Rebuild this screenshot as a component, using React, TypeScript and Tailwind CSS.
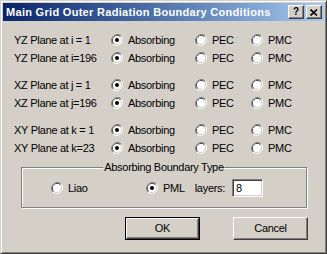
import React from 'react'

const rows = [
  { label: 'YZ Plane at i = 1' },
  { label: 'YZ Plane at i=196' },
  { label: 'XZ Plane at j = 1', gap: true },
  { label: 'XZ Plane at j=196' },
  { label: 'XY Plane at k = 1', gap: true },
  { label: 'XY Plane at k=23' },
]

const Radio = ({ checked = false }: { checked?: boolean }) => (
  <svg width="12" height="12" viewBox="0 0 12 12" className="shrink-0">
    <path d="M10.2 1.8A6 6 0 0 0 1.8 10.2" fill="none" stroke="#808080" strokeWidth="1" />
    <path d="M9.5 2.5A5 5 0 0 0 2.5 9.5" fill="none" stroke="#404040" strokeWidth="1" />
    <path d="M1.8 10.2A6 6 0 0 0 10.2 1.8" fill="none" stroke="#ffffff" strokeWidth="1" />
    <path d="M2.5 9.5A5 5 0 0 0 9.5 2.5" fill="none" stroke="#d4d0c8" strokeWidth="1" />
    <circle cx="6" cy="6" r="4" fill="#ffffff" />
    {checked && <circle cx="6" cy="6" r="2" fill="#000000" />}
  </svg>
)

const Option = ({ text, checked = false }: { text: string; checked?: boolean }) => (
  <div className="flex items-center gap-[5px]">
    <Radio checked={checked} />
    <span>{text}</span>
  </div>
)

const raised = 'border border-t-white border-l-white border-b-[#404040] border-r-[#404040] shadow-[inset_-1px_-1px_0_#808080]'

export default function App() {
  return (
    <div className="w-[327px] h-[254px] bg-[#d4d0c8] border border-t-[#d4d0c8] border-l-[#d4d0c8] border-b-[#404040] border-r-[#404040] shadow-[inset_1px_1px_0_#fff,inset_-1px_-1px_0_#808080] p-[2px] flex flex-col font-['Liberation_Sans',Arial,sans-serif] text-[11px] text-black tracking-[-0.3px]">
      <div className="h-[18px] bg-linear-to-r from-[#0a246a] to-[#a6caf0] flex items-center pl-[3px] pr-[2px]">
        <span className="flex-1 text-white font-bold text-[11px] tracking-[0.3px] leading-none">
          Main Grid Outer Radiation Boundary Conditions
        </span>
        <div className={`w-[16px] h-[14px] bg-[#d4d0c8] flex items-center justify-center font-bold text-[10px] tracking-normal leading-none ${raised}`}>
          ?
        </div>
        <div className={`w-[16px] h-[14px] ml-[2px] bg-[#d4d0c8] flex items-center justify-center ${raised}`}>
          <svg width="8" height="7" viewBox="0 0 8 7">
            <path d="M0.5 0.5L7 6.5M7 0.5L0.5 6.5" stroke="#000" strokeWidth="1.6" />
          </svg>
        </div>
      </div>

      <div className="flex flex-col pt-[10px]">
        {rows.map((r, i) => (
          <div
            key={i}
            className={`grid grid-cols-[97px_84px_56px_1fr] items-center h-[18px] pl-[11px] ${r.gap ? 'mt-[9px]' : ''}`}
          >
            <span className="whitespace-nowrap">{r.label}</span>
            <Option text="Absorbing" checked />
            <Option text="PEC" />
            <Option text="PMC" />
          </div>
        ))}
      </div>

      <div className="relative mt-[10px] ml-[18px] mr-[17px] h-[41px] border border-[#808080] shadow-[inset_1px_1px_0_#fff,1px_1px_0_#fff]">
        <span className="absolute left-1/2 -translate-x-1/2 -top-[8px] bg-[#d4d0c8] px-[1px] whitespace-nowrap leading-[14px]">
          Absorbing Boundary Type
        </span>
        <div className="flex items-center h-full pl-[29px] pt-[1px]">
          <div className="w-[95px]">
            <Option text="Liao" />
          </div>
          <Option text="PML" checked />
          <span className="ml-[10px]">layers:</span>
          <div className="ml-[7px] w-[31px] h-[18px] bg-white border border-t-[#808080] border-l-[#808080] border-b-white border-r-white shadow-[inset_1px_1px_0_#404040,inset_-1px_-1px_0_#d4d0c8] flex items-center pl-[3px]">
            8
          </div>
        </div>
      </div>

      <div className="flex mt-[9px] pl-[122px] gap-[33px]">
        <div className="w-[75px] h-[23px] border border-black">
          <div className={`w-full h-full flex items-center justify-center ${raised}`}>OK</div>
        </div>
        <div className={`w-[75px] h-[23px] flex items-center justify-center ${raised}`}>Cancel</div>
      </div>
    </div>
  )
}
